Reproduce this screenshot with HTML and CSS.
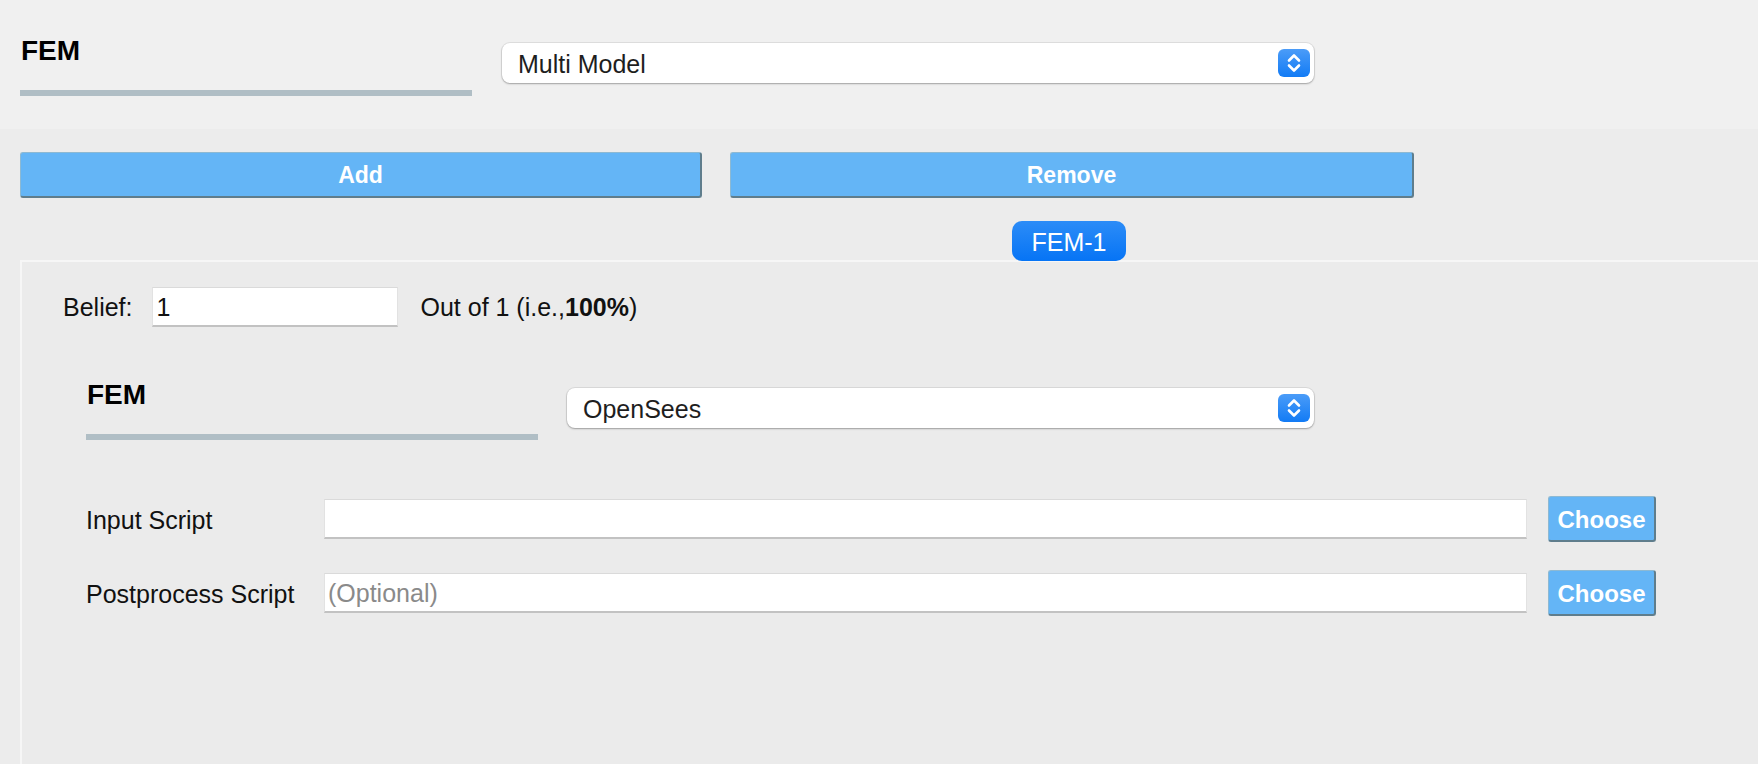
FILE: index.html
```html
<!DOCTYPE html>
<html>
<head>
<meta charset="utf-8">
<title>FEM</title>
<link rel="stylesheet" href="styles.css">
</head>
<body>
<div class="header">
  <div class="title-block">
    <div class="title">FEM</div>
    <div class="title-bar"></div>
  </div>
  <div class="combo combo-top">
    <span class="combo-text">Multi Model</span>
    <span class="combo-arrow"><svg width="32" height="28" viewBox="0 0 32 28"><path d="M11 11.5 L16 6.5 L21 11.5 M11 16.5 L16 21.5 L21 16.5" fill="none" stroke="#fff" stroke-width="2.6" stroke-linecap="round" stroke-linejoin="round"/></svg></span>
  </div>
</div>
<div class="main">
  <div class="btn-row">
    <div class="btn btn-add">Add</div>
    <div class="btn btn-remove">Remove</div>
  </div>
  <div class="tabbar"><div class="tab">FEM-1</div></div>
  <div class="panel">
    <div class="belief-row">
      <span class="lbl">Belief:</span>
      <div class="field belief-field">1</div>
      <span class="lbl out-of">Out of 1 (i.e.,<b>100%</b>)</span>
    </div>
    <div class="fem-section">
      <div class="section-head inner-head">
        <div class="title-block">
          <div class="title">FEM</div>
          <div class="title-bar"></div>
        </div>
        <div class="combo combo-inner">
          <span class="combo-text">OpenSees</span>
          <span class="combo-arrow"><svg width="32" height="28" viewBox="0 0 32 28"><path d="M11 11.5 L16 6.5 L21 11.5 M11 16.5 L16 21.5 L21 16.5" fill="none" stroke="#fff" stroke-width="2.6" stroke-linecap="round" stroke-linejoin="round"/></svg></span>
        </div>
      </div>
      <div class="file-rows">
        <div class="file-row">
          <span class="lbl row-lbl">Input Script</span>
          <div class="field path-field"></div>
          <div class="btn btn-choose">Choose</div>
        </div>
        <div class="file-row">
          <span class="lbl row-lbl">Postprocess Script</span>
          <div class="field path-field placeholder">(Optional)</div>
          <div class="btn btn-choose">Choose</div>
        </div>
      </div>
    </div>
  </div>
</div>
</body>
</html>
```

FILE: styles.css
```css
* { box-sizing: border-box; }
html, body { margin: 0; height: 100%; }
body {
  background: #ececec;
  font-family: "Liberation Sans", Arial, sans-serif;
  color: #111;
  overflow: hidden;
}

.header {
  background: #f0f0f0;
  height: 129px;
  display: flex;
  align-items: flex-start;
  padding-left: 20px;
}
.title-block { width: 452px; flex: none; }
.header .title-block { padding-top: 37px; }
.title {
  font-size: 28px;
  line-height: 28px;
  font-weight: bold;
  color: #000;
  padding-left: 1px;
}
.title-bar {
  height: 6px;
  background: #b0bec5;
  margin-top: 25px;
}

.combo {
  display: flex;
  align-items: center;
  justify-content: space-between;
  background: #fff;
  border-radius: 8px;
  box-shadow: 0 0 0 1px rgba(0,0,0,0.07), 0 1px 2px rgba(0,0,0,0.28);
  padding: 0 4px 0 16px;
  flex: none;
}
.combo-text { font-size: 25px; color: #1e1e1e; padding-top: 2px; }
.combo-arrow {
  width: 32px;
  height: 28px;
  border-radius: 6px;
  background: linear-gradient(#4b9cf8, #127bf5);
  display: flex;
}
.combo-top { margin-left: 30px; margin-top: 6px; width: 812px; height: 40px; }
.header .combo-top { margin-top: 43px; }

.main { padding: 23px 0 0 20px; height: calc(100% - 129px); display: flex; flex-direction: column; }

.btn-row { display: flex; gap: 28px; }
.btn {
  background: #64b5f6;
  color: #fff;
  font-weight: bold;
  display: flex;
  align-items: center;
  justify-content: center;
  border-radius: 3px;
  border-top: 1px solid #8db9d3;
  border-left: 1px solid #8db9d3;
  border-right: 2px solid #5f7d8c;
  border-bottom: 2px solid #5f7d8c;
  padding-top: 2px;
}
.btn-add, .btn-remove { height: 46px; font-size: 23px; }
.btn-add { width: 682px; }
.btn-remove { width: 684px; }

.tabbar { margin-top: 23px; padding-left: 992px; height: 39px; position: relative; z-index: 1; }
.tab {
  width: 114px;
  height: 40px;
  border-radius: 10px;
  background: linear-gradient(#2c8cf7, #0674f5);
  color: #fff;
  font-size: 25px;
  display: flex;
  align-items: center;
  justify-content: center;
  padding-top: 2px;
}

.panel {
  flex: 1;
  border-top: 2px solid #f6f6f6;
  border-left: 2px solid #f6f6f6;
  background: #ebebeb;
  padding: 25px 0 0 41px;
}

.lbl { font-size: 25px; color: #111; }

.field {
  background: #fff;
  border-top: 1px solid #dadada;
  border-left: 1px solid #e2e2e2;
  border-right: 1px solid #e2e2e2;
  border-bottom: 2px solid #c2c2c2;
  height: 40px;
  font-size: 25px;
  display: flex;
  align-items: center;
  padding: 2px 0 0 3px;
  color: #111;
}
.placeholder { color: #8a8a8a; }

.belief-row { display: flex; align-items: center; height: 40px; }
.belief-field { width: 246px; margin-left: 20px; }
.out-of { margin-left: 22px; }

.fem-section { margin-left: 23px; }
.section-head { display: flex; align-items: flex-start; }
.inner-head { margin-top: 54px; }
.combo-inner { margin-left: 29px; margin-top: 7px; width: 747px; height: 40px; }

.file-rows { margin-top: 56px; display: flex; flex-direction: column; gap: 28px; }
.file-row { display: flex; align-items: center; height: 46px; }
.row-lbl { width: 238px; flex: none; padding-top: 2px; }
.path-field { width: 1203px; }
.btn-choose { width: 108px; height: 46px; margin-left: 21px; font-size: 24px; }
```
